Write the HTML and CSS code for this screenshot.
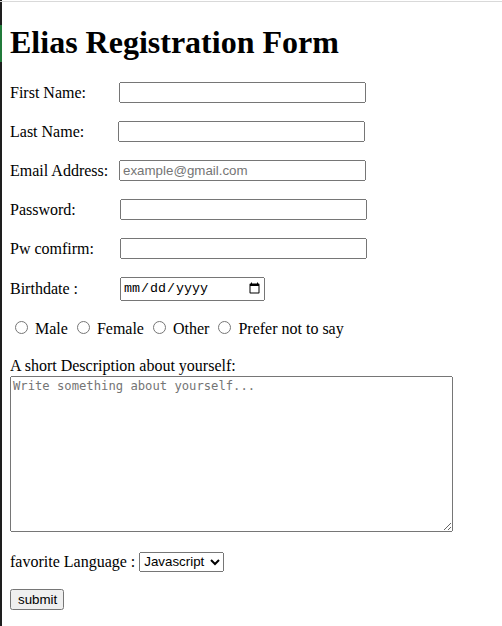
FILE: index.html
```html
<!DOCTYPE html>
<html lang="en">
<head>
<meta charset="utf-8">
<title>Elias Registration Form</title>
<link rel="stylesheet" href="styles.css">
</head>
<body class="page">
<h1 class="title">Elias Registration Form</h1>
<form class="form">
  <p class="row field"><label class="lbl" for="fn">First Name:</label><input class="text-in" id="fn" type="text"></p>
  <p class="row field"><label class="lbl lbl-last" for="ln">Last Name:</label><input class="text-in" id="ln" type="text"></p>
  <p class="row field"><label class="lbl" for="em">Email Address:</label><input class="text-in" id="em" type="email" placeholder="example@gmail.com"></p>
  <p class="row field"><label class="lbl lbl-pw" for="pw">Password:</label><input class="text-in" id="pw" type="password"></p>
  <p class="row field"><label class="lbl lbl-pw" for="pc">Pw comfirm:</label><input class="text-in" id="pc" type="password"></p>
  <p class="row field row-date"><label class="lbl lbl-pw" for="bd">Birthdate :</label><input class="date-in" id="bd" type="date"></p>
  <p class="row radios"><input class="radio" type="radio" name="g" id="m"> <label for="m">Male</label> <input class="radio" type="radio" name="g" id="f"> <label for="f">Female</label> <input class="radio" type="radio" name="g" id="o"> <label for="o">Other</label> <input class="radio" type="radio" name="g" id="n"> <label for="n">Prefer not to say</label></p>
  <p class="row desc"><label class="desc-lbl" for="d">A short Description about yourself:</label><textarea class="area" id="d" placeholder="Write something about yourself..."></textarea></p>
  <p class="row field"><label for="lang">favorite Language :</label><select class="sel" id="lang"><option>Javascript</option><option>Python</option></select></p>
  <p class="row"><button class="btn" type="submit">submit</button></p>
</form>
</body>
</html>
```
FILE: styles.css
```css
html {
  background:
    linear-gradient(#d9d9d9, #d9d9d9) 0 1px / 100% 1px no-repeat,
    linear-gradient(to bottom, #1e1e1e 25px, #217a3a 25px, #217a3a 62px, #1e1e1e 62px) 0 0 / 2px 100% no-repeat,
    #fff;
  padding-left: 2px;
  min-height: 100%;
}
.page {
  margin: 8px;
  font-family: "Liberation Serif", "Times New Roman", serif;
  font-size: 16px;
  color: #000;
}
.title {
  font-size: 32px;
  font-weight: bold;
  margin: 16px 0 20px;
}
.row {
  margin: 16px 0;
}
.field {
  display: flex;
  align-items: center;
  height: 23px;
}
.row-date {
  height: 26px;
  align-items: flex-start;
}
.row-date .lbl {
  line-height: 26px;
}
.lbl {
  width: 109px;
  flex: none;
}
.lbl-last { width: 108px; }
.lbl-pw { width: 110px; }
.text-in {
  box-sizing: border-box;
  width: 247px;
  height: 21px;
  margin: 0;
  font-family: "Liberation Sans", Arial, sans-serif;
  font-size: 13.33px;
}
.text-in::placeholder { color: #757575; }
.date-in {
  box-sizing: border-box;
  width: 145px;
  height: 24px;
  margin: 1px 0 0;
  font-family: "Liberation Mono", monospace;
  font-size: 13.33px;
}
.radios {
  height: 22px;
  line-height: 22px;
}
.desc {
  padding-bottom: 2px;
}
.desc-lbl {
  display: block;
  line-height: 20px;
}
.area {
  display: block;
  box-sizing: border-box;
  width: 443px;
  height: 156px;
  margin: 0;
  font-family: "DejaVu Sans Mono", monospace;
  font-size: 12.2px;
}
.area::placeholder { color: #757575; }
.sel {
  box-sizing: border-box;
  width: 85px;
  height: 20px;
  margin: 0 0 0 4px;
  font-family: "Liberation Sans", Arial, sans-serif;
  font-size: 13.33px;
}
.btn {
  box-sizing: border-box;
  width: 54px;
  height: 21px;
  font-family: "Liberation Sans", Arial, sans-serif;
  font-size: 13.33px;
}
```
